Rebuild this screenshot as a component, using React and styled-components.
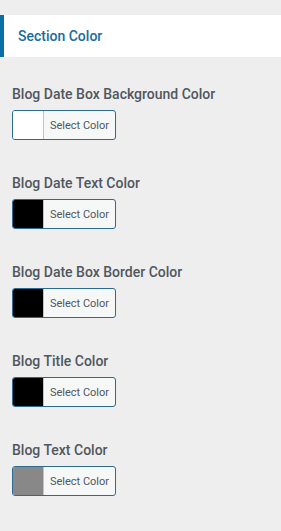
import React from "react";
import styled, { createGlobalStyle } from "styled-components";

const Global = createGlobalStyle`
  body {
    margin: 0;
    background: #eeeeee;
    font-family: Roboto, "Liberation Sans", sans-serif;
  }
`;

const Panel = styled.div`
  width: 281px;
  min-height: 531px;
  padding-top: 15px;
  box-sizing: border-box;
  background: #eeeeee;
`;

const SectionHeader = styled.div`
  height: 42px;
  display: flex;
  align-items: center;
  background: #ffffff;
  border-left: 4px solid #0a6fa6;
  padding-left: 14px;
  color: #1a6c9e;
  font-size: 14px;
  font-weight: 500;
`;

const List = styled.div`
  display: flex;
  flex-direction: column;
  gap: 35px;
  padding: 29px 12px 0;
`;

const Field = styled.div`
  display: flex;
  flex-direction: column;
  gap: 7px;
`;

const Label = styled.div`
  font-size: 14px;
  font-weight: 500;
  line-height: 17px;
  color: #50575e;
`;

const Picker = styled.button`
  display: flex;
  align-items: stretch;
  width: 104px;
  height: 30px;
  padding: 0;
  border: 1px solid #2a6a93;
  border-radius: 3px;
  background: #f6f7f7;
  overflow: hidden;
  cursor: pointer;
`;

const Swatch = styled.span`
  width: 30px;
  background: ${(p) => p.$color};
  border-right: 1px solid #c3c4c7;
`;

const PickerText = styled.span`
  flex: 1;
  display: flex;
  align-items: center;
  justify-content: center;
  font-family: Roboto, "Liberation Sans", sans-serif;
  font-size: 11px;
  color: #50575e;
`;

const fields = [
  { label: "Blog Date Box Background Color", color: "#ffffff" },
  { label: "Blog Date Text Color", color: "#000000" },
  { label: "Blog Date Box Border Color", color: "#000000" },
  { label: "Blog Title Color", color: "#000000" },
  { label: "Blog Text Color", color: "#888888" },
];

const App = () => {
  return (
    <Panel>
      <Global />
      <SectionHeader>Section Color</SectionHeader>
      <List>
        {fields.map((f, i) => (
          <Field key={i}>
            <Label>{f.label}</Label>
            <Picker>
              <Swatch $color={f.color} />
              <PickerText>Select Color</PickerText>
            </Picker>
          </Field>
        ))}
      </List>
    </Panel>
  );
};

export default App;
